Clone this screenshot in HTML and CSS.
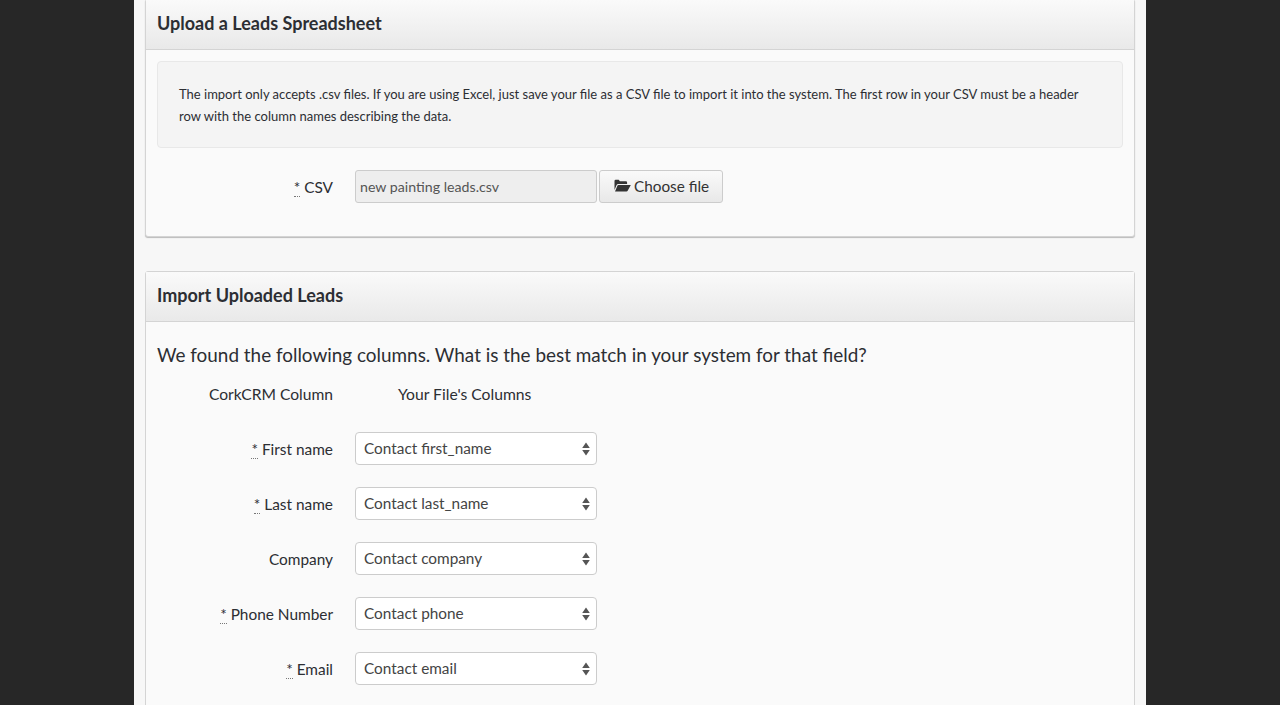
FILE: index.html
```html
<!DOCTYPE html>
<html lang="en">
<head>
<meta charset="utf-8">
<title>Upload Leads</title>
<link rel="stylesheet" href="styles.css">
</head>
<body>
<main class="page">
  <section class="panel panel-upload">
    <h2 class="panel-head">Upload a Leads Spreadsheet</h2>
    <div class="panel-body">
      <div class="well">The import only accepts .csv files. If you are using Excel, just save your file as a CSV file to import it into the system. The first row in your CSV must be a header row with the column names describing the data.</div>
      <div class="row row-file">
        <label class="label"><abbr class="req" title="required">*</abbr> CSV</label>
        <div class="file-group">
          <input class="file-name" type="text" value="new painting leads.csv" disabled>
          <button class="btn" type="button">
            <svg class="icon" width="17" height="13" viewBox="0 0 17 13"><path d="M0.5 11V2a1.2 1.2 0 0 1 1.2-1.2h3l1.2 1.4h6a1.2 1.2 0 0 1 1.2 1.2V5H4.2a1.8 1.8 0 0 0-1.6 1z" fill="#333"/><path d="M1 12.4h11.4a1.6 1.6 0 0 0 1.4-.9L16.8 6H4.4a1 1 0 0 0-.9.5z" fill="#333"/></svg>
            Choose file
          </button>
        </div>
      </div>
    </div>
  </section>

  <section class="panel panel-import">
    <h2 class="panel-head">Import Uploaded Leads</h2>
    <div class="panel-body">
      <h3 class="lead">We found the following columns. What is the best match in your system for that field?</h3>
      <div class="row row-head">
        <div class="label">CorkCRM Column</div>
        <div class="col-title">Your File's Columns</div>
      </div>
      <div class="row">
        <label class="label"><abbr class="req" title="required">*</abbr> First name</label>
        <div class="select-wrap"><select class="select"><option>Contact first_name</option></select><svg class="arrows" width="8" height="14" viewBox="0 0 8 14"><path d="M4 0.5L7.8 6H0.2zM4 13.5L0.2 8H7.8z" fill="#555"/></svg></div>
      </div>
      <div class="row">
        <label class="label"><abbr class="req" title="required">*</abbr> Last name</label>
        <div class="select-wrap"><select class="select"><option>Contact last_name</option></select><svg class="arrows" width="8" height="14" viewBox="0 0 8 14"><path d="M4 0.5L7.8 6H0.2zM4 13.5L0.2 8H7.8z" fill="#555"/></svg></div>
      </div>
      <div class="row">
        <label class="label">Company</label>
        <div class="select-wrap"><select class="select"><option>Contact company</option></select><svg class="arrows" width="8" height="14" viewBox="0 0 8 14"><path d="M4 0.5L7.8 6H0.2zM4 13.5L0.2 8H7.8z" fill="#555"/></svg></div>
      </div>
      <div class="row">
        <label class="label"><abbr class="req" title="required">*</abbr> Phone Number</label>
        <div class="select-wrap"><select class="select"><option>Contact phone</option></select><svg class="arrows" width="8" height="14" viewBox="0 0 8 14"><path d="M4 0.5L7.8 6H0.2zM4 13.5L0.2 8H7.8z" fill="#555"/></svg></div>
      </div>
      <div class="row">
        <label class="label"><abbr class="req" title="required">*</abbr> Email</label>
        <div class="select-wrap"><select class="select"><option>Contact email</option></select><svg class="arrows" width="8" height="14" viewBox="0 0 8 14"><path d="M4 0.5L7.8 6H0.2zM4 13.5L0.2 8H7.8z" fill="#555"/></svg></div>
      </div>
    </div>
  </section>
</main>
</body>
</html>
```
FILE: styles.css
```css
* { box-sizing: border-box; }
html, body { height: 705px; overflow: hidden; }
body {
  margin: 0;
  background: #272727;
  color: #2c2e33;
  font-family: Lato, "Open Sans", sans-serif;
  font-size: 15.4px;
}
.page {
  width: 1012px;
  height: 800px;
  margin: 0 auto;
  padding: 0 11px;
  background: #f7f7f7;
}
.panel {
  background: #fafafa;
  border: 1px solid #d4d4d4;
  border-radius: 3px;
}
.panel-upload {
  margin-top: -1px;
  height: 238px;
  box-shadow: 0 1px 1px rgba(0,0,0,.25);
}
.panel-import { margin-top: 34px; padding-bottom: 60px; }
.panel-head {
  margin: 0;
  height: 50px;
  padding: 0 11px;
  line-height: 46px;
  font-size: 18px;
  font-weight: 700;
  color: #2c2e33;
  background: linear-gradient(#fafafa, #e9e9e9);
  border-bottom: 1px solid #d4d4d4;
}
.panel-body { padding: 11px; }
.well {
  height: 87px;
  padding: 21px;
  font-size: 13px;
  line-height: 22px;
  background: #f4f4f4;
  border: 1px solid #e8e8e8;
  border-radius: 4px;
}
.row {
  display: grid;
  grid-template-columns: 176px 242px;
  column-gap: 22px;
  align-items: center;
  height: 33px;
  margin-bottom: 22px;
}
.row-file { margin-top: 21px; grid-template-columns: 176px auto; }
.row-head { height: 22px; margin-bottom: 26px; font-size: 15.6px; grid-template-columns: 176px auto; }
.label { text-align: right; line-height: 33px; padding-top: 2px; }
.row-head .label { padding-top: 0; line-height: 22px; }
.col-title { padding-left: 43px; line-height: 22px; font-size: 15.7px; }
.req { border-bottom: 1px dotted #777; text-decoration: none; }
.file-group { display: flex; gap: 2px; align-items: stretch; height: 33px; }
.file-name {
  width: 242px;
  height: 33px;
  padding: 0 4px;
  font: 14.2px Lato, sans-serif;
  color: #555;
  background: #eee;
  border: 1px solid #ccc;
  border-radius: 3px;
  opacity: 1;
}
.btn {
  display: flex;
  align-items: center;
  gap: 3px;
  height: 33px;
  padding: 0 13px 2px 14px;
  font: 15.3px Lato, sans-serif;
  color: #333;
  background: linear-gradient(#fafafa, #e8e8e8);
  border: 1px solid #ccc;
  border-radius: 3px;
}
.select-wrap { position: relative; width: 242px; height: 33px; }
.select {
  display: block;
  width: 100%;
  height: 33px;
  padding: 0 8px 2px;
  appearance: none;
  font: 15.35px Lato, sans-serif;
  color: #444;
  background: #fff;
  border: 1px solid #ccc;
  border-radius: 4px;
}
.arrows { position: absolute; right: 7px; top: 10px; pointer-events: none; }
.lead {
  margin: 11px 0 17px;
  font-size: 18.9px;
  font-weight: 400;
  line-height: 22px;
  color: #2c2e33;
}
```
